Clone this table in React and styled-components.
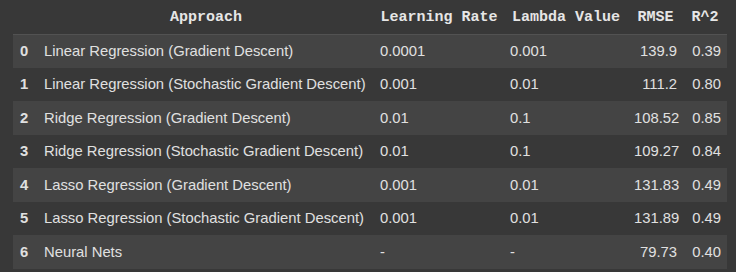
import React from 'react';
import styled, { createGlobalStyle } from 'styled-components';

const rows = [
    ['Linear Regression (Gradient Descent)', '0.0001', '0.001', '139.9', '0.39'],
    ['Linear Regression (Stochastic Gradient Descent)', '0.001', '0.01', '111.2', '0.80'],
    ['Ridge Regression (Gradient Descent)', '0.01', '0.1', '108.52', '0.85'],
    ['Ridge Regression (Stochastic Gradient Descent)', '0.01', '0.1', '109.27', '0.84'],
    ['Lasso Regression (Gradient Descent)', '0.001', '0.01', '131.83', '0.49'],
    ['Lasso Regression (Stochastic Gradient Descent)', '0.001', '0.01', '131.89', '0.49'],
    ['Neural Nets', '-', '-', '79.73', '0.40'],
];

const columns = [
    { label: '', width: 25 },
    { label: 'Approach', width: 336 },
    { label: 'Learning Rate', width: 130 },
    { label: 'Lambda Value', width: 124 },
    { label: 'RMSE', width: 55, align: 'right' },
    { label: 'R^2', width: 44, align: 'right' },
];

const App = () => (
    <>
        <GlobalStyle />
        <Wrapper>
            <Table>
                <colgroup>
                    {columns.map((c, i) => <col key={i} style={{ width: c.width }} />)}
                </colgroup>
                <thead>
                    <tr>
                        {columns.map((c, i) => <Th key={i}>{c.label}</Th>)}
                    </tr>
                </thead>
                <tbody>
                    {rows.map((r, i) => (
                        <Row key={i} $striped={i % 2 === 0}>
                            <Index>{i}</Index>
                            {r.map((v, j) => (
                                <Td key={j} $align={columns[j + 1].align}>{v}</Td>
                            ))}
                        </Row>
                    ))}
                </tbody>
            </Table>
        </Wrapper>
    </>
);

const GlobalStyle = createGlobalStyle`
    html, body {
        margin: 0;
        background: #383838;
    }
`;

const Wrapper = styled.div`
    padding: 0 9px 0 13px;
    width: 714px;
`;

const Table = styled.table`
    width: 714px;
    table-layout: fixed;
    border-collapse: collapse;
    color: #e0e0e0;
    font-family: "Liberation Sans", Arial, sans-serif;
    font-size: 14.8px;
`;

const Th = styled.th`
    box-sizing: border-box;
    height: 34px;
    padding: 2px 6px 0;
    border-bottom: 1px solid #525252;
    font-family: "Liberation Mono", "Courier New", monospace;
    font-weight: bold;
    font-size: 15px;
    color: #e6e6e6;
    text-align: center;
    white-space: nowrap;
`;

const Row = styled.tr`
    height: 33.5px;
    background: ${p => (p.$striped ? '#444444' : 'transparent')};
`;

const Td = styled.td`
    padding: 0 6px;
    text-align: ${p => p.$align || 'left'};
    white-space: nowrap;
`;

const Index = styled.td`
    padding: 0 0 0 7px;
    font-weight: bold;
`;

export default App;
